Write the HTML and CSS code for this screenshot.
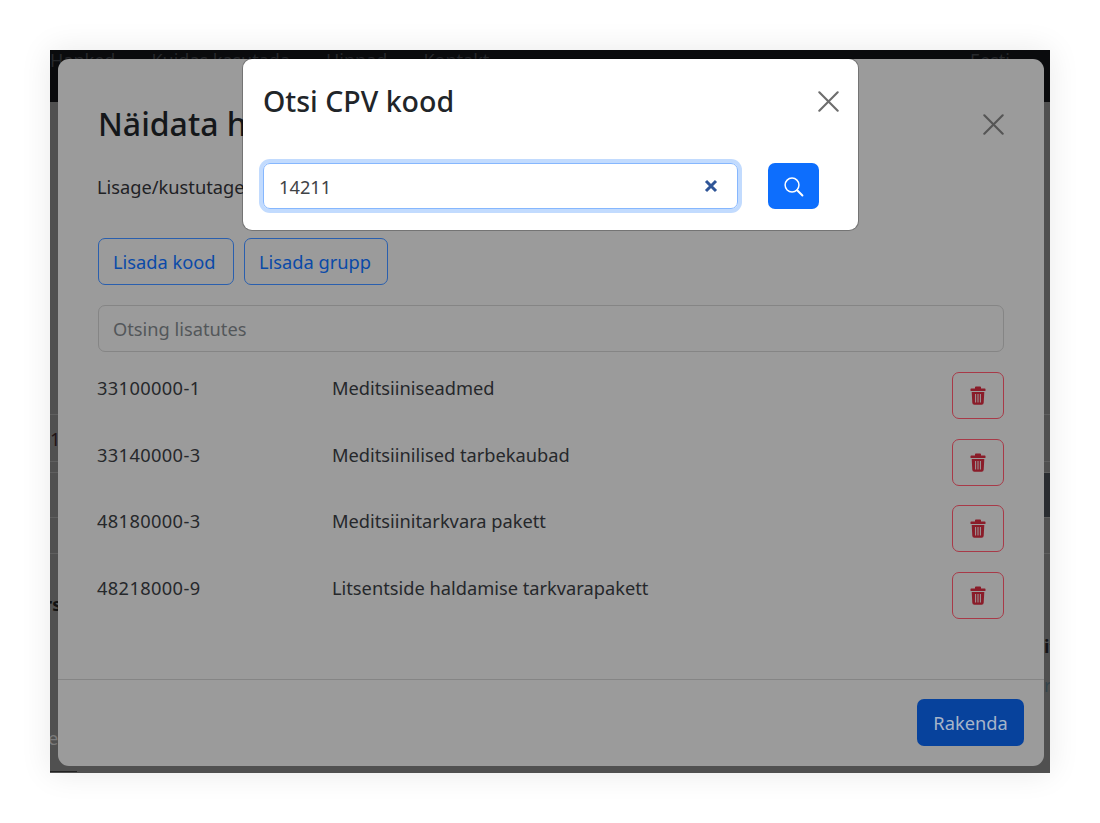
FILE: index.html
```html
<!DOCTYPE html>
<html lang="et">
<head>
<meta charset="utf-8">
<title>Otsi CPV kood</title>
<link rel="stylesheet" href="styles.css">
</head>
<body>
<svg class="defs" width="0" height="0"><symbol id="trash" viewBox="0 0 16 19"><path d="M.5 3.1Q.5 2.4 1.2 2.4H5V1.3Q5 .4 5.9.4h4.2q.9 0 .9.9v1.1h3.8q.7 0 .7.7v1.3q0 .7-.7.7H1.2q-.7 0-.7-.7zM1.7 6h12.6l-.6 10.7q-.1 2-2.1 2H4.4q-2 0-2.1-2zM5.1 8v8.6h1V8zM7.5 8v8.6h1V8zM9.9 8v8.6h1V8z" fill="#8a1c29" fill-rule="evenodd"/></symbol></svg>
<div class="shot">
  <nav class="topbar">
    <span>Hanked</span><span>Kuidas kasutada</span><span>Hinnad</span><span>Kontakt</span><span class="lang">Eesti</span>
  </nav>
  <div class="under">
    <div class="under-row r1"></div>
    <div class="under-row r2"><span>1</span></div>
    <div class="under-row r3"></div>
    <div class="under-row r4"><i class="dark-cell"></i></div>
    <div class="under-row r5"></div>
    <div class="r6">
      <div class="left-col">
        <b class="frag-b">rs</b>
        <span class="frag-e">e</span>
        <i class="left-line"></i>
      </div>
      <div class="right-col">
        <b class="frag-it">it</b>
        <span class="frag-r">r.</span>
      </div>
    </div>
  </div>
  <div class="modal-back">
    <header class="back-head">
      <h2>Näidata h</h2>
      <svg viewBox="0 0 16 16" width="21" height="21"><path d="M1 1l14 14M15 1L1 15" stroke="#555" stroke-width="1.6" fill="none" stroke-linecap="round"/></svg>
    </header>
    <div class="back-body">
      <p class="lead">Lisage/kustutage</p>
      <div class="btns">
        <button class="btn-o">Lisada kood</button>
        <button class="btn-o">Lisada grupp</button>
      </div>
      <div class="filter">Otsing lisatutes</div>
      <ul class="rows">
        <li class="row"><span class="code">33100000-1</span><span class="name">Meditsiiniseadmed</span><button class="del"><svg width="16" height="19"><use href="#trash"/></svg></button></li>
        <li class="row"><span class="code">33140000-3</span><span class="name">Meditsiinilised tarbekaubad</span><button class="del"><svg width="16" height="19"><use href="#trash"/></svg></button></li>
        <li class="row"><span class="code">48180000-3</span><span class="name">Meditsiinitarkvara pakett</span><button class="del"><svg width="16" height="19"><use href="#trash"/></svg></button></li>
        <li class="row"><span class="code">48218000-9</span><span class="name">Litsentside haldamise tarkvarapakett</span><button class="del"><svg width="16" height="19"><use href="#trash"/></svg></button></li>
      </ul>
    </div>
    <footer class="back-foot"><button class="apply">Rakenda</button></footer>
  </div>
  <div class="modal-front">
    <header class="front-head">
      <h2>Otsi CPV kood</h2>
      <svg viewBox="0 0 16 16" width="21" height="21"><path d="M1 1l14 14M15 1L1 15" stroke="#6d6d6d" stroke-width="1.6" fill="none" stroke-linecap="round"/></svg>
    </header>
    <div class="front-body">
      <div class="search">
        <span class="val">14211</span>
        <svg viewBox="0 0 14 14" width="14" height="14"><path d="M2 2l10 10M12 2L2 12" stroke="#2f5597" stroke-width="3" fill="none"/></svg>
      </div>
      <button class="go"><svg viewBox="0 0 20 20" width="21" height="21"><circle cx="8.6" cy="8.6" r="6.6" fill="none" stroke="#fff" stroke-width="1.4"/><path d="M13.5 13.5l5 5" stroke="#fff" stroke-width="1.9" stroke-linecap="round"/></svg></button>
    </div>
  </div>
</div>
</body>
</html>
```
FILE: styles.css
```css
* { box-sizing: border-box; }
html, body { margin: 0; height: 823px; overflow: hidden; background: #fff; }
body { padding: 50px; font-family: "Noto Sans", "Open Sans", sans-serif; color: #212529; font-size: 18.25px; }
h2, p, ul { margin: 0; padding: 0; }
button { font: inherit; cursor: pointer; background: none; }
.defs { position: absolute; }
.shot { position: relative; width: 1000px; height: 723px; background: #505050; box-shadow: 0 0 30px rgba(0,0,0,.09); overflow: hidden; display: flex; flex-direction: column; }
.topbar { height: 52px; background: #0a0b0d; flex: none; display: flex; gap: 36px; color: #26282b; font-size: 18px; line-height: 20px; overflow: hidden; white-space: nowrap; }
.lang { margin-left: auto; margin-right: 40px; }
.under { flex: 1; display: flex; flex-direction: column; }
.under-row { border-bottom: 1px solid #5f5f5f; color: #1f1416; flex: none; }
.r1 { height: 313px; }
.r2 { height: 47px; padding-top: 12px; line-height: 24px; }
.r3 { height: 11px; }
.r4 { height: 45px; display: flex; justify-content: flex-end; }
.dark-cell { width: 6px; background: #2a2d31; }
.r5 { height: 36px; }
.r6 { flex: 1; display: flex; justify-content: space-between; }
.left-col { width: 8px; display: flex; flex-direction: column; line-height: 24px; white-space: nowrap; }
.frag-b { margin: 38px 0 0 -6px; color: #111; }
.frag-e { margin: 110px 0 0 -2px; color: #7a7a7a; }
.left-line { margin-top: auto; margin-bottom: 1px; width: 27px; height: 1px; background: #222; }
.right-col { width: 6px; display: flex; flex-direction: column; line-height: 24px; white-space: nowrap; }
.frag-it { margin-top: 80px; color: #141416; }
.frag-r { margin-top: 15px; color: #35444c; }
.modal-back { position: absolute; left: 8px; top: 9px; width: 986px; height: 707px; background: #9b9b9b; border-radius: 11px; display: flex; flex-direction: column; }
.back-head { display: flex; justify-content: space-between; align-items: center; padding: 45px 40px 0; height: 85px; }
.back-head h2 { font-size: 32px; font-weight: 500; line-height: 40px; color: #14171a; white-space: nowrap; }
.back-body { flex: 1; padding: 0 40px; }
.lead { margin: 29px 0 0 -1px; line-height: 27px; color: #1f2225; }
.btns { display: flex; gap: 10px; margin-top: 38px; }
.btn-o { width: 136px; height: 47px; padding: 0 0 0 14px; text-align: left; border: 1px solid #2a5fae; border-radius: 7px; color: #0a4aa8; }
.btn-o + .btn-o { width: 144px; }
.filter { margin-top: 20px; height: 47px; border: 1px solid #858585; border-radius: 7px; padding: 0 14px; line-height: 45px; color: #53575a; }
.rows { list-style: none; margin-top: 20px; }
.row { display: flex; height: 66.5px; align-items: flex-start; }
.code { width: 235px; margin-left: -1px; line-height: 32px; color: #26282b; letter-spacing: .36px; }
.name { flex: 1; line-height: 32px; color: #26282b; }
.del { width: 52px; height: 47px; border: 1px solid #a83a48; border-radius: 7px; display: flex; align-items: center; justify-content: center; padding: 0; }
.back-foot { height: 87px; border-top: 1px solid #858585; display: flex; justify-content: flex-end; align-items: center; padding: 0 20px 2px 0; }
.apply { width: 107px; height: 47px; background: #07429c; border: 0; border-radius: 7px; color: #a7b5c9; }
.modal-front { position: absolute; left: 193px; top: 9px; width: 615px; height: 171px; background: #fff; border-radius: 9px; box-shadow: 0 0 0 1px rgba(0,0,0,.25); }
.front-head { display: flex; justify-content: space-between; align-items: center; padding: 23px 19px 0 20px; }
.front-head h2 { font-size: 28.5px; font-weight: 500; line-height: 38px; color: #212529; }
.front-body { display: flex; align-items: center; padding: 43px 0 0 20px; gap: 30px; }
.search { width: 475px; height: 46px; border: 1px solid #86b7fe; border-radius: 7px; box-shadow: 0 0 0 4px #c2dbfe; display: flex; align-items: center; justify-content: space-between; padding: 0 19px 0 15px; }
.val { color: #3f4347; }
.go { width: 51px; height: 46px; border: 0; border-radius: 7px; background: #0d6efd; display: flex; align-items: center; justify-content: center; padding: 0; }
```
